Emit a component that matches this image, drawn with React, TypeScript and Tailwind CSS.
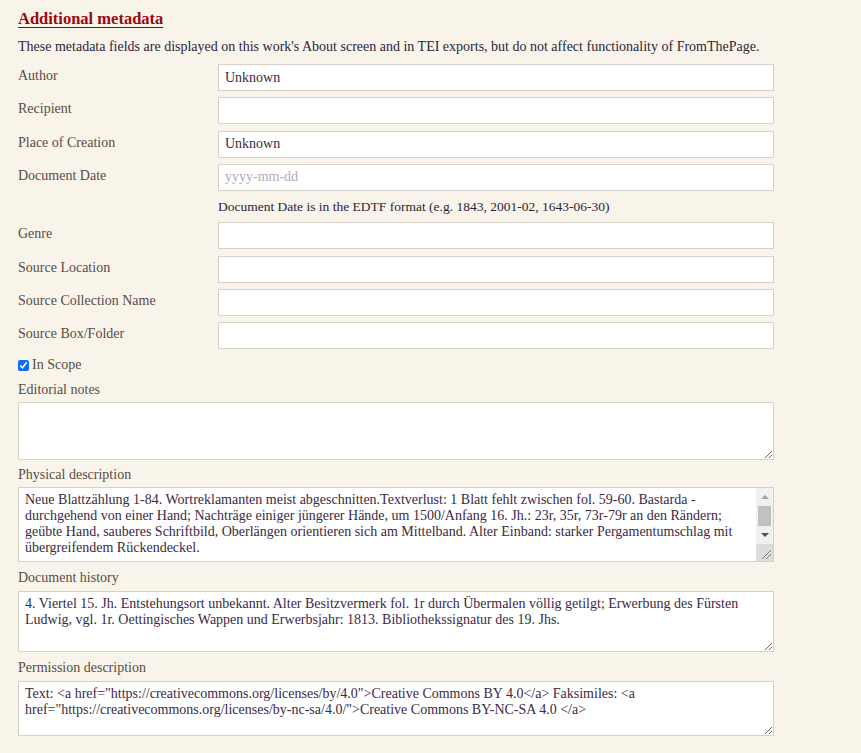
import { useState } from "react";

const fields = [
  { label: "Author", value: "Unknown" },
  { label: "Recipient", value: "" },
  { label: "Place of Creation", value: "Unknown" },
  { label: "Document Date", value: "", placeholder: "yyyy-mm-dd", help: true },
  { label: "Genre", value: "" },
  { label: "Source Location", value: "" },
  { label: "Source Collection Name", value: "" },
  { label: "Source Box/Folder", value: "" },
];

const physical =
  "Neue Blattzählung 1-84. Wortreklamanten meist abgeschnitten.Textverlust: 1 Blatt fehlt zwischen fol. 59-60. Bastarda - durchgehend von einer Hand; Nachträge einiger jüngerer Hände, um 1500/Anfang 16. Jh.: 23r, 35r, 73r-79r an den Rändern; geübte Hand, sauberes Schriftbild, Oberlängen orientieren sich am Mittelband. Alter Einband: starker Pergamentumschlag mit übergreifendem Rückendeckel.\n\nProvenienz: Oettingen-Wallerstein.";

const history =
  "4. Viertel 15. Jh. Entstehungsort unbekannt. Alter Besitzvermerk fol. 1r durch Übermalen völlig getilgt; Erwerbung des Fürsten Ludwig, vgl. 1r. Oettingisches Wappen und Erwerbsjahr: 1813. Bibliothekssignatur des 19. Jhs.";

const permission =
  'Text: <a href="https://creativecommons.org/licenses/by/4.0">Creative Commons BY 4.0</a> Faksimiles: <a href="https://creativecommons.org/licenses/by-nc-sa/4.0/">Creative Commons BY-NC-SA 4.0 </a>';

const inputCls =
  "w-[556px] h-[27px] bg-white border border-[#d6d1c9] px-[6px] text-[14px] text-[#3b2a45] outline-none placeholder:text-[#b3abb9]";
const areaCls =
  "block w-[756px] bg-white border border-[#d6d1c9] px-[6px] pt-[4px] pb-[4px] text-[14px] leading-[16px] text-[#3b2a45] outline-none";
const labelCls = "text-[14px] leading-[16px] text-[#5c4b45]";

// fake classic scrollbar drawn over the physical description box
function Scrollbar() {
  return (
    <div className="absolute right-[1px] top-[1px] bottom-[1px] w-[17px] flex flex-col bg-[#f1f1f1]">
      <div className="h-[17px] flex items-center justify-center">
        <svg width="8" height="5" viewBox="0 0 8 5">
          <path d="M0 5 L4 1 L8 5 Z" fill="#a3a3a3" />
        </svg>
      </div>
      <div className="flex-1 px-[2px] py-[1px]">
        <div className="h-full bg-[#c1c1c1]" />
      </div>
      <div className="h-[17px] flex items-center justify-center">
        <svg width="8" height="5" viewBox="0 0 8 5">
          <path d="M0 0 L4 4 L8 0 Z" fill="#505050" />
        </svg>
      </div>
      <div className="h-[17px] bg-[#dcdcdc] flex items-end justify-end p-[2px]">
        <svg width="10" height="10" viewBox="0 0 10 10">
          <path d="M1 10 L10 1 M5 10 L10 5" stroke="#7a7a7a" strokeWidth="1" />
        </svg>
      </div>
    </div>
  );
}

export default function App() {
  const [inScope, setInScope] = useState(true);

  return (
    <div
      className="min-h-[753px] bg-[#f8f4ea] pl-[18px] pt-[8px] text-[#3b2a45]"
      style={{ fontFamily: '"Liberation Serif", serif' }}
    >
      <h3 className="text-[16.5px] leading-[22px] font-bold text-[#9b0a0a] underline underline-offset-[3px] w-fit">
        Additional metadata
      </h3>
      <p className="mt-[8px] text-[14px] leading-[18px] text-[#2d2538]">
        These metadata fields are displayed on this work's About screen and in TEI exports, but do not affect
        functionality of FromThePage.
      </p>

      <div className="mt-[8px] flex flex-col gap-[6.33px]">
        {fields.map((f) => (
          <div key={f.label}>
            <div className="flex items-start">
              <label className={`w-[200px] pt-[4px] ${labelCls}`}>{f.label}</label>
              <input className={inputCls} defaultValue={f.value} placeholder={f.placeholder} />
            </div>
            {f.help && (
              <p className="ml-[200px] mt-[6px] text-[13.5px] leading-[19px] text-[#2d2538]">
                Document Date is in the EDTF format (e.g. 1843, 2001-02, 1643-06-30)
              </p>
            )}
          </div>
        ))}
      </div>

      <label className={`mt-[8px] flex items-center gap-[3px] ${labelCls}`}>
        <input
          type="checkbox"
          checked={inScope}
          onChange={(e) => setInScope(e.target.checked)}
          className="m-0 h-[11px] w-[11px] accent-[#0b6cff]"
        />
        In Scope
      </label>

      <div className={`mt-[9px] ${labelCls}`}>Editorial notes</div>
      <textarea className={`${areaCls} mt-[4px] h-[58px]`} defaultValue="" />

      <div className={`mt-[7px] ${labelCls}`}>Physical description</div>
      <div className="relative mt-[4px] w-[756px] h-[75px]">
        <textarea
          className={`${areaCls} h-full resize-none overflow-hidden pr-[23px]`}
          defaultValue={physical}
        />
        <Scrollbar />
      </div>

      <div className={`mt-[8px] ${labelCls}`}>Document history</div>
      <textarea className={`${areaCls} mt-[5px] h-[61px]`} defaultValue={history} />

      <div className={`mt-[8px] ${labelCls}`}>Permission description</div>
      <textarea className={`${areaCls} mt-[5px] h-[55px] border-[#a59c94]`} defaultValue={permission} />
    </div>
  );
}
